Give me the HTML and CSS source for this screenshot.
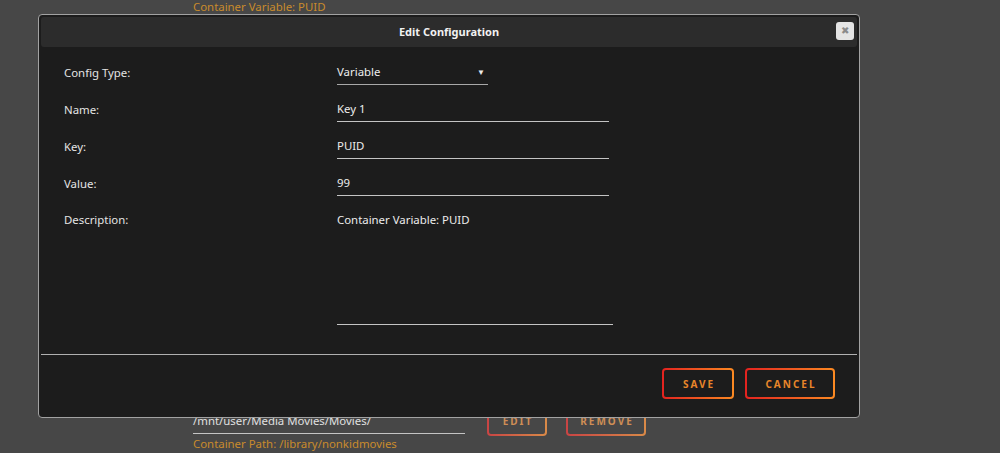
FILE: index.html
```html
<!DOCTYPE html>
<html lang="en">
<head>
    <meta charset="UTF-8">
    <meta name="viewport" content="width=device-width, initial-scale=1.0">
    <title>Edit Configuration</title>
    <link rel="stylesheet" href="styles.css">
</head>
<body>
    <div class="page">
        <div class="entry-desc entry-first">Container Variable: PUID</div>

        <div class="entry-last">
            <div class="entry">
                <div class="field">/mnt/user/Media Movies/Movies/</div>
                <div class="entry-actions">
                    <button class="btn btn-faded btn-edit">EDIT</button>
                    <button class="btn btn-faded btn-remove">REMOVE</button>
                </div>
            </div>
            <div class="entry-desc">Container Path: /library/nonkidmovies</div>
        </div>
    </div>

    <div class="dialog">
        <div class="dialog-title">
            Edit Configuration
            <button class="close" title="close">&#10006;</button>
        </div>

        <div class="form">
            <div class="row">
                <label>Config Type:</label>
                <div class="input select">Variable <span class="caret">&#9660;</span></div>
            </div>
            <div class="row">
                <label>Name:</label>
                <div class="input">Key 1</div>
            </div>
            <div class="row">
                <label>Key:</label>
                <div class="input">PUID</div>
            </div>
            <div class="row">
                <label>Value:</label>
                <div class="input">99</div>
            </div>
            <div class="row row-top">
                <label>Description:</label>
                <div class="input textarea">Container Variable: PUID</div>
            </div>
        </div>

        <div class="dialog-buttons">
            <button class="btn btn-save">SAVE</button>
            <button class="btn btn-cancel">CANCEL</button>
        </div>
    </div>
</body>
</html>
```

FILE: styles.css
```css
:root {
    --bg-page: #474747;
    --bg-dialog: #1c1c1c;
    --bg-title: #2c2c2c;
    --text: #e4e4e4;
    --line: #c4c4c4;
    --orange: #e8862a;
    --desc: #c98b2c;
}

body {
    margin: 0;
    background-color: var(--bg-page);
    font-family: 'Noto Sans', sans-serif;
    font-size: 11.4px;
    color: var(--text);
}

.page {
    height: 453px;
    box-sizing: border-box;
    padding: 0 0 1px 193px;
    display: flex;
    flex-direction: column;
    justify-content: space-between;
    overflow: hidden;
}

.entry-desc {
    color: var(--desc);
    line-height: 16px;
}

.entry-first {
    line-height: 14px;
    padding-top: 0;
}

.entry {
    display: flex;
    align-items: flex-end;
}

.field {
    width: 272px;
    height: 25px;
    line-height: 24px;
    box-sizing: border-box;
    border-bottom: 1px solid var(--line);
    color: #e0e0e0;
    margin-bottom: 2px;
}

.entry-actions {
    display: flex;
    gap: 19px;
    margin-left: 22px;
}

.btn {
    font-family: 'Noto Sans', sans-serif;
    font-weight: bold;
    font-size: 10px;
    letter-spacing: 2px;
    height: 31px;
    padding: 0 0 0 2px;
    border: 2px solid transparent;
    border-radius: 4px;
    background: linear-gradient(var(--bg-dialog), var(--bg-dialog)) padding-box,
                linear-gradient(90deg, #e3221f, #fb8a22) border-box;
    color: var(--orange);
    cursor: pointer;
}

.btn-faded {
    height: 30px;
    background: linear-gradient(var(--bg-page), var(--bg-page)) padding-box,
                linear-gradient(90deg, #c94444, #d98a48) border-box;
    color: #cf8e55;
}

.btn-edit {
    width: 60px;
}

.btn-remove {
    width: 80px;
}

/* modal */
.dialog {
    position: fixed;
    left: 38px;
    top: 14px;
    width: 822px;
    height: 404px;
    box-sizing: border-box;
    padding: 2px;
    background-color: var(--bg-dialog);
    border: 1px solid #a2a2a2;
    border-radius: 4px;
    display: flex;
    flex-direction: column;
}

.dialog-title {
    position: relative;
    height: 30px;
    line-height: 30px;
    background-color: var(--bg-title);
    border-radius: 3px;
    text-align: center;
    font-weight: bold;
    font-size: 11px;
    color: #f2f2f2;
}

.close {
    position: absolute;
    right: 3px;
    top: 5px;
    width: 18px;
    height: 18px;
    padding: 0;
    border: none;
    border-radius: 3px;
    background-color: #e4e4e4;
    color: #8a8a8a;
    font-size: 10px;
    line-height: 18px;
    cursor: pointer;
}

.form {
    padding: 13px 0 0 23px;
    border-bottom: 1px solid #b0b0b0;
    height: 308px;
    box-sizing: border-box;
}

.row {
    display: grid;
    grid-template-columns: 273px auto;
    align-items: center;
    margin-bottom: 12px;
}

.row-top {
    align-items: start;
}

.row label {
    color: var(--text);
}

.input {
    width: 272px;
    height: 25px;
    line-height: 24px;
    box-sizing: border-box;
    border-bottom: 1px solid var(--line);
    color: #ececec;
}

.select {
    width: 151px;
    display: flex;
    justify-content: space-between;
    border-bottom-color: #a8a8a8;
}

.caret {
    font-size: 8px;
    padding-right: 3px;
}

.textarea {
    width: 276px;
    height: 117px;
}

.row-top label {
    line-height: 24px;
}

.dialog-buttons {
    display: flex;
    justify-content: flex-end;
    gap: 11px;
    padding: 13px 22px 0 0;
}

.btn-save {
    width: 72px;
}

.btn-cancel {
    width: 90px;
}
```
